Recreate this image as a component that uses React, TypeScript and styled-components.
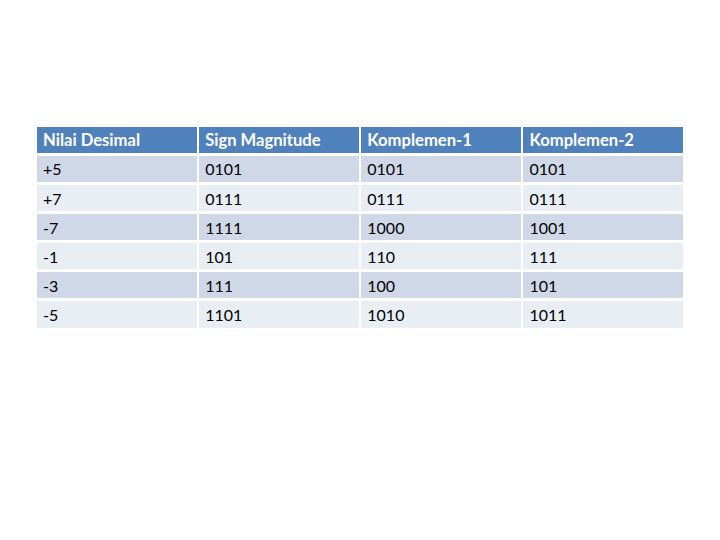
import React from "react";
import styled, { createGlobalStyle } from "styled-components";

const GlobalStyle = createGlobalStyle`
  html, body {
    margin: 0;
    padding: 0;
    background: #ffffff;
  }
`;

const Page = styled.div`
  width: 720px;
  height: 540px;
  padding: 127px 0 0 37px;
  box-sizing: border-box;
  font-family: Lato, "Open Sans", sans-serif;
`;

const Table = styled.div`
  width: 646px;
  display: grid;
  grid-template-columns: repeat(4, 1fr);
  grid-template-rows: 26px;
  grid-auto-rows: 26.3px;
  gap: 2.8px 2.6px;
`;

const Cell = styled.div<{ $kind: "head" | "odd" | "even" }>`
  display: flex;
  align-items: center;
  padding: 0 0 0 6px;
  font-size: ${(p) => (p.$kind === "head" ? "16.6px" : "16px")};
  color: ${(p) => (p.$kind === "head" ? "#ffffff" : "#000000")};
  font-weight: ${(p) => (p.$kind === "head" ? 700 : 400)};
  background: ${(p) =>
    p.$kind === "head" ? "#4f81bd" : p.$kind === "odd" ? "#d0d8e8" : "#e9edf4"};
`;

const headers = ["Nilai Desimal", "Sign Magnitude", "Komplemen-1", "Komplemen-2"];

const rows = [
  ["+5", "0101", "0101", "0101"],
  ["+7", "0111", "0111", "0111"],
  ["-7", "1111", "1000", "1001"],
  ["-1", "101", "110", "111"],
  ["-3", "111", "100", "101"],
  ["-5", "1101", "1010", "1011"],
];

const App: React.FC = () => (
  <Page>
    <GlobalStyle />
    <Table>
      {headers.map((h) => (
        <Cell key={h} $kind="head">
          {h}
        </Cell>
      ))}
      {rows.map((row, i) =>
        row.map((value, j) => (
          <Cell key={`${i}-${j}`} $kind={i % 2 === 0 ? "odd" : "even"}>
            {value}
          </Cell>
        ))
      )}
    </Table>
  </Page>
);

export default App;
